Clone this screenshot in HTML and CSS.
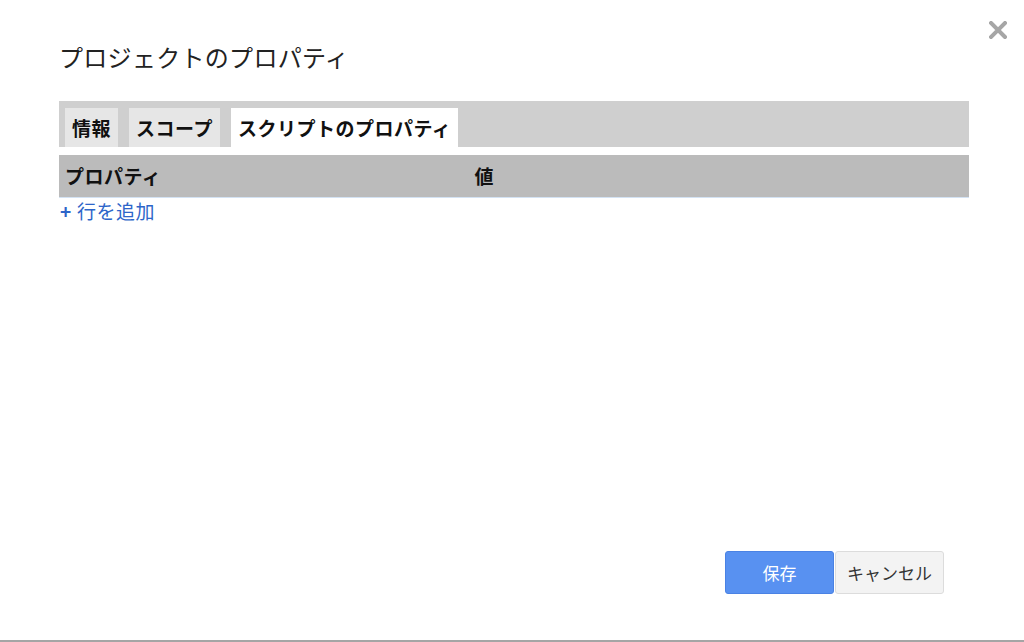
FILE: index.html
```html
<!DOCTYPE html>
<html lang="ja">

<head>
    <meta charset="UTF-8">
    <meta name="viewport" content="width=device-width, initial-scale=1.0">
    <title>プロジェクトのプロパティ</title>
    <link rel="stylesheet" href="styles.css">
</head>

<body>
    <div class="dialog">
        <button class="close-button" aria-label="閉じる">
            <svg width="18" height="18" viewBox="0 0 18 18">
                <path d="M2 2 L16 16 M16 2 L2 16" stroke="#a6a6a6" stroke-width="4" stroke-linecap="square" fill="none"/>
            </svg>
        </button>

        <h1 class="dialog-title">プロジェクトのプロパティ</h1>

        <div class="tabs">
            <div class="tab">情報</div>
            <div class="tab">スコープ</div>
            <div class="tab active">スクリプトのプロパティ</div>
        </div>

        <div class="table-header">
            <div class="col-name">プロパティ</div>
            <div class="col-value">値</div>
        </div>
        <a class="add-row" href="#"><span class="plus">+</span>行を追加</a>

        <div class="actions">
            <button class="btn btn-primary">保存</button>
            <button class="btn">キャンセル</button>
        </div>
    </div>
</body>

</html>
```

FILE: styles.css
```css
* {
    margin: 0;
    padding: 0;
    box-sizing: border-box;
}

body {
    font-family: 'Noto Sans CJK JP', 'Noto Sans', sans-serif;
    background-color: #fff;
    color: #222;
}

.dialog {
    position: relative;
    display: flex;
    flex-direction: column;
    height: 642px;
    padding: 0 55px 0 59px;
    border-bottom: 2px solid #a5a5a5;
}

.close-button {
    position: absolute;
    top: 21px;
    right: 17px;
    width: 18px;
    height: 18px;
    background: transparent;
    border: none;
    cursor: pointer;
}

.close-button svg {
    display: block;
}

.dialog-title {
    margin-top: 40px;
    font-size: 24px;
    font-weight: 400;
    line-height: 34px;
    letter-spacing: 0.3px;
    color: #222;
}

.tabs {
    display: flex;
    gap: 11px;
    height: 46px;
    margin-top: 27px;
    padding: 7px 6px 0;
    background-color: #cfcfcf;
}

.tab {
    padding: 0 7px;
    font-size: 19px;
    font-weight: 700;
    line-height: 39px;
    letter-spacing: 0.5px;
    color: #111;
    background-color: #e6e6e6;
}

.tab.active {
    background-color: #fff;
}

.table-header {
    display: flex;
    height: 43px;
    margin-top: 8px;
    background-color: #bbbbbb;
    border-bottom: 1px solid #d3e2f3;
    font-size: 19px;
    font-weight: 700;
    line-height: 42px;
    letter-spacing: 0.5px;
    color: #111;
}

.col-name {
    width: 45%;
    padding-left: 6px;
}

.col-value {
    padding-left: 6px;
}

.add-row {
    align-self: flex-start;
    padding-left: 1px;
    font-size: 19px;
    line-height: 26px;
    letter-spacing: 0.5px;
    color: #2d65c9;
    text-decoration: none;
}

.add-row .plus {
    display: inline-block;
    width: 17px;
    font-weight: 700;
}

.actions {
    display: flex;
    justify-content: flex-end;
    gap: 1px;
    margin-top: auto;
    padding: 0 25px 46px 0;
}

.btn {
    width: 109px;
    height: 43px;
    font-family: 'Noto Sans CJK JP', 'Noto Sans', sans-serif;
    font-size: 17px;
    color: #333;
    background-color: #f3f3f3;
    border: 1px solid #dcdcdc;
    border-radius: 3px;
    cursor: pointer;
}

.btn-primary {
    color: #fff;
    background-color: #5891f1;
    border-color: #4a82e4;
}
```
